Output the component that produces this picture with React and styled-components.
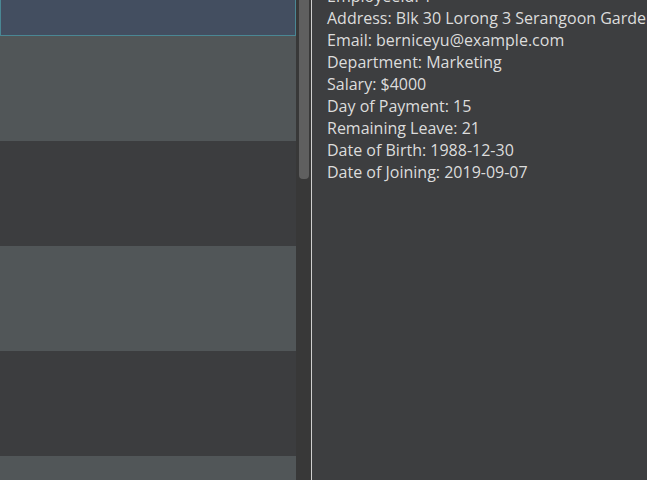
import React from "react";
import styled, { createGlobalStyle } from "styled-components";

const GlobalStyle = createGlobalStyle`
  html, body {
    margin: 0;
    padding: 0;
    background: #3d3e40;
    overflow: hidden;
  }
`;

const employees = [
  { id: 0, selected: true },
  { id: 1 },
  { id: 2 },
  { id: 3 },
  { id: 4 },
  { id: 5 },
];

const details = [
  "EmployeeId: 1",
  "Address: Blk 30 Lorong 3 Serangoon Gardens, #07-18",
  "Email: berniceyu@example.com",
  "Department: Marketing",
  "Salary: $4000",
  "Day of Payment: 15",
  "Remaining Leave: 21",
  "Date of Birth: 1988-12-30",
  "Date of Joining: 2019-09-07",
];

const App = () => {
  return (
    <>
      <GlobalStyle />
      <Window>
        <ListPane>
          <ListInner>
            {employees.map((e, i) => (
              <Cell key={e.id} selected={e.selected} odd={i % 2 === 1} />
            ))}
          </ListInner>
        </ListPane>
        <ScrollTrack>
          <Thumb />
        </ScrollTrack>
        <Divider />
        <DetailPane>
          <DetailText>
            {details.map((line) => (
              <Line key={line}>{line}</Line>
            ))}
          </DetailText>
        </DetailPane>
      </Window>
    </>
  );
};

export default App;

const Window = styled.div`
  display: flex;
  width: 647px;
  height: 480px;
  overflow: hidden;
`;

const ListPane = styled.div`
  width: 296px;
  flex-shrink: 0;
  overflow: hidden;
  background: #3c3d3f;
`;

const ListInner = styled.div`
  display: flex;
  flex-direction: column;
  margin-top: -69px;
`;

const Cell = styled.div`
  box-sizing: border-box;
  height: 105px;
  flex-shrink: 0;
  background: ${(p) =>
    p.selected ? "#434e60" : p.odd ? "#515658" : "#3c3d3f"};
  border: ${(p) => (p.selected ? "1px solid #4a8794" : "none")};
`;

const ScrollTrack = styled.div`
  width: 15px;
  flex-shrink: 0;
  background: #383838;
  padding: 0 2px 0 3px;
  box-sizing: border-box;
`;

const Thumb = styled.div`
  height: 179px;
  background: #5f5f5f;
  border-radius: 0 0 4px 4px;
`;

const Divider = styled.div`
  width: 1px;
  flex-shrink: 0;
  background: #cfcfcf;
`;

const DetailPane = styled.div`
  flex: 1;
  background: #3d3e40;
  overflow: hidden;
  padding-left: 15px;
`;

const DetailText = styled.div`
  margin-top: -15px;
  font-family: "Open Sans", "Noto Sans", sans-serif;
  font-size: 16px;
  line-height: 22px;
  color: #dcdcdc;
  white-space: nowrap;
`;

const Line = styled.div``;
